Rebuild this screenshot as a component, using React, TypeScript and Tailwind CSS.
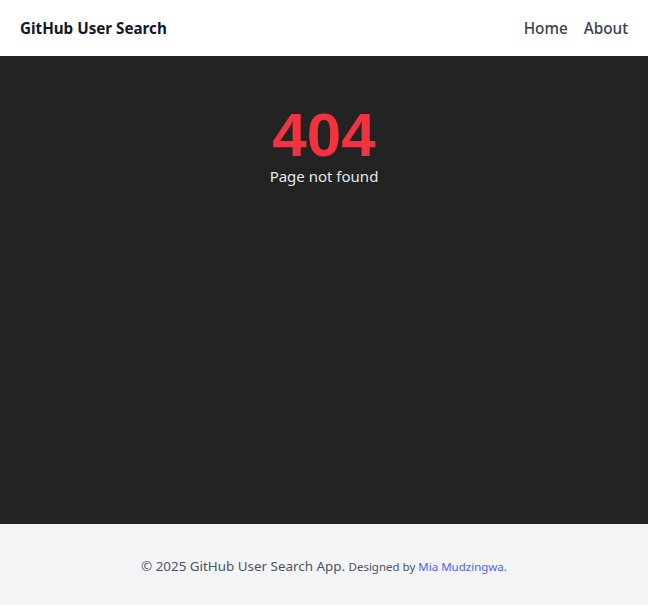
export default function App() {
  return (
    <div className="min-h-screen flex flex-col font-['Noto_Sans','Open_Sans',sans-serif]">
      <header className="h-14 bg-white flex items-center justify-between px-5">
        <span className="text-[15.2px] font-bold text-gray-900">GitHub User Search</span>
        <nav className="flex items-center gap-4 text-[15.3px] text-gray-700">
          <a href="#" className="font-medium">Home</a>
          <a href="#" className="font-medium">About</a>
        </nav>
      </header>

      <main className="flex-1 bg-[#232323] flex flex-col items-center pt-12">
        <h1 className="text-[62px] leading-none font-bold text-[#f0333f] font-['Liberation_Sans',Arial,sans-serif]">404</h1>
        <p className="text-[15px] text-gray-200 leading-5">Page not found</p>
      </main>

      <footer className="bg-gray-100 pt-[32px] pb-[28px] text-center">
        <p className="text-[13.4px] text-gray-600 leading-5">
          © 2025 GitHub User Search App.{' '}
          <span className="text-[11.5px]">
            Designed by <a href="#" className="text-[#5560f3]">Mia Mudzingwa</a>.
          </span>
        </p>
      </footer>
    </div>
  );
}
